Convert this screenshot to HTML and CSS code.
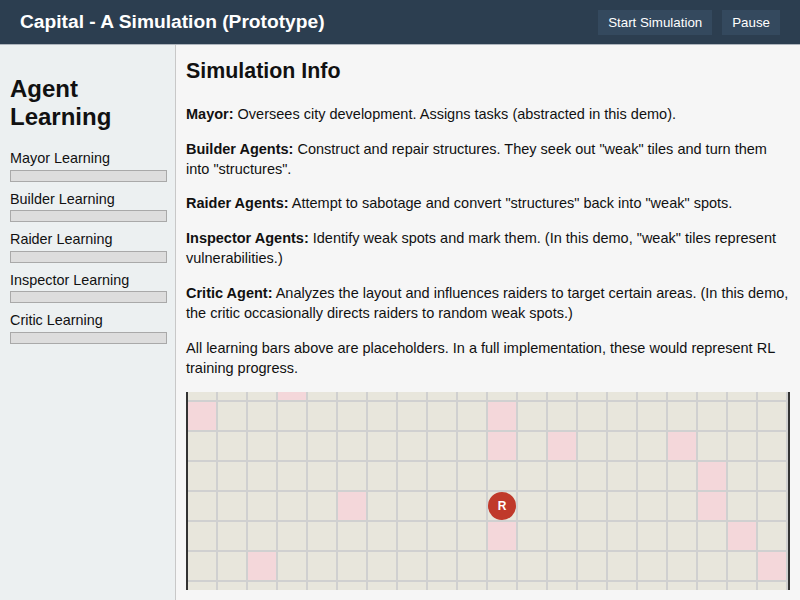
FILE: index.html
```html
<!DOCTYPE html>
<html lang="en">
<head>
<meta charset="utf-8">
<title>Capital - A Simulation (Prototype)</title>
<link rel="stylesheet" href="styles.css">
</head>
<body>
<header class="topbar">
  <h1 class="title">Capital - A Simulation (Prototype)</h1>
  <div class="controls">
    <button class="btn">Start Simulation</button>
    <button class="btn">Pause</button>
  </div>
</header>
<div class="layout">
  <aside class="sidebar">
    <h2 class="side-title">Agent Learning</h2>
    <div class="agent"><div class="agent-label">Mayor Learning</div><div class="bar"></div></div>
    <div class="agent"><div class="agent-label">Builder Learning</div><div class="bar"></div></div>
    <div class="agent"><div class="agent-label">Raider Learning</div><div class="bar"></div></div>
    <div class="agent"><div class="agent-label">Inspector Learning</div><div class="bar"></div></div>
    <div class="agent"><div class="agent-label">Critic Learning</div><div class="bar"></div></div>
  </aside>
  <main class="main">
    <h2 class="main-title">Simulation Info</h2>
    <p class="info"><strong>Mayor:</strong> Oversees city development. Assigns tasks (abstracted in this demo).</p>
    <p class="info"><strong>Builder Agents:</strong> Construct and repair structures. They seek out "weak" tiles and turn them into "structures".</p>
    <p class="info"><strong>Raider Agents:</strong> Attempt to sabotage and convert "structures" back into "weak" spots.</p>
    <p class="info"><strong>Inspector Agents:</strong> Identify weak spots and mark them. (In this demo, "weak" tiles represent vulnerabilities.)</p>
    <p class="info"><strong>Critic Agent:</strong> Analyzes the layout and influences raiders to target certain areas. (In this demo, the critic occasionally directs raiders to random weak spots.)</p>
    <p class="info">All learning bars above are placeholders. In a full implementation, these would represent RL training progress.</p>
    <div class="map">
      <div class="grid">
        <div class="t"></div><div class="t"></div><div class="t"></div><div class="t w"></div><div class="t"></div><div class="t"></div><div class="t"></div><div class="t"></div><div class="t"></div><div class="t"></div><div class="t"></div><div class="t"></div><div class="t"></div><div class="t"></div><div class="t"></div><div class="t"></div><div class="t"></div><div class="t"></div><div class="t"></div><div class="t"></div>
        <div class="t w"></div><div class="t"></div><div class="t"></div><div class="t"></div><div class="t"></div><div class="t"></div><div class="t"></div><div class="t"></div><div class="t"></div><div class="t"></div><div class="t w"></div><div class="t"></div><div class="t"></div><div class="t"></div><div class="t"></div><div class="t"></div><div class="t"></div><div class="t"></div><div class="t"></div><div class="t"></div>
        <div class="t"></div><div class="t"></div><div class="t"></div><div class="t"></div><div class="t"></div><div class="t"></div><div class="t"></div><div class="t"></div><div class="t"></div><div class="t"></div><div class="t w"></div><div class="t"></div><div class="t w"></div><div class="t"></div><div class="t"></div><div class="t"></div><div class="t w"></div><div class="t"></div><div class="t"></div><div class="t"></div>
        <div class="t"></div><div class="t"></div><div class="t"></div><div class="t"></div><div class="t"></div><div class="t"></div><div class="t"></div><div class="t"></div><div class="t"></div><div class="t"></div><div class="t"></div><div class="t"></div><div class="t"></div><div class="t"></div><div class="t"></div><div class="t"></div><div class="t"></div><div class="t w"></div><div class="t"></div><div class="t"></div>
        <div class="t"></div><div class="t"></div><div class="t"></div><div class="t"></div><div class="t"></div><div class="t w"></div><div class="t"></div><div class="t"></div><div class="t"></div><div class="t"></div><div class="t"><span class="raider">R</span></div><div class="t"></div><div class="t"></div><div class="t"></div><div class="t"></div><div class="t"></div><div class="t"></div><div class="t w"></div><div class="t"></div><div class="t"></div>
        <div class="t"></div><div class="t"></div><div class="t"></div><div class="t"></div><div class="t"></div><div class="t"></div><div class="t"></div><div class="t"></div><div class="t"></div><div class="t"></div><div class="t w"></div><div class="t"></div><div class="t"></div><div class="t"></div><div class="t"></div><div class="t"></div><div class="t"></div><div class="t"></div><div class="t w"></div><div class="t"></div>
        <div class="t"></div><div class="t"></div><div class="t w"></div><div class="t"></div><div class="t"></div><div class="t"></div><div class="t"></div><div class="t"></div><div class="t"></div><div class="t"></div><div class="t"></div><div class="t"></div><div class="t"></div><div class="t"></div><div class="t"></div><div class="t"></div><div class="t"></div><div class="t"></div><div class="t"></div><div class="t w"></div>
        <div class="t"></div><div class="t"></div><div class="t"></div><div class="t"></div><div class="t"></div><div class="t"></div><div class="t"></div><div class="t"></div><div class="t"></div><div class="t"></div><div class="t"></div><div class="t"></div><div class="t"></div><div class="t"></div><div class="t"></div><div class="t"></div><div class="t"></div><div class="t"></div><div class="t"></div><div class="t"></div>
      </div>
    </div>
  </main>
</div>
</body>
</html>
```

FILE: styles.css
```css
* { box-sizing: border-box; }
html, body { height: 100%; }
body {
  margin: 0;
  font-family: "Liberation Sans", Arial, Helvetica, sans-serif;
  color: #111;
  display: flex;
  flex-direction: column;
  overflow: hidden;
}
.topbar {
  flex-shrink: 0;
  height: 45px;
  background: #2c3e50;
  border-bottom: 1px solid #aeb5bd;
  display: flex;
  align-items: center;
  justify-content: space-between;
  padding: 0 20px;
}
.title {
  margin: 0;
  color: #fff;
  font-size: 19.2px;
  font-weight: bold;
}
.controls { display: flex; gap: 10px; }
.btn {
  font-family: "Liberation Sans", Arial, sans-serif;
  font-size: 13.333px;
  line-height: 15px;
  padding: 5px 10px;
  border: none;
  background: #34495e;
  color: #fff;
}
.layout {
  flex: 1;
  min-height: 0;
  display: flex;
}
.sidebar {
  width: 176px;
  flex-shrink: 0;
  padding: 10px;
  background: #ecf0f1;
  border-right: 1px solid #c8c8c8;
}
.side-title {
  font-size: 24px;
  margin: 20px 0;
  line-height: 27.6px;
}
.agent { margin-bottom: 9px; }
.agent-label {
  font-size: 14.4px;
  line-height: 16.5px;
  margin-bottom: 3px;
}
.bar {
  box-sizing: content-box;
  width: 100%;
  height: 10px;
  background: #dddddd;
  border: 1px solid #a9a9a9;
}
.main {
  flex: 1;
  min-width: 0;
  padding: 10px;
  background: #f6f6f6;
  display: flex;
  flex-direction: column;
}
.main-title {
  font-size: 21.4px;
  margin: 4px 0 20px;
  line-height: 25px;
}
.info {
  font-size: 14.5px;
  line-height: 20.2px;
  margin: 0 0 14.4px;
}
.map {
  flex: 1;
  min-height: 0;
  overflow: hidden;
  display: flex;
  flex-direction: column;
  justify-content: center;
  border-left: 2px solid #333;
  border-right: 2px solid #333;
}
.grid {
  flex-shrink: 0;
  margin-top: 2px;
  display: grid;
  grid-template-columns: repeat(20, 30px);
  grid-auto-rows: 30px;
}
.t {
  background: #e8e6dc;
  border-right: 2px solid #d0d0d0;
  border-bottom: 2px solid #d0d0d0;
  display: flex;
  align-items: center;
  justify-content: center;
}
.t.w { background: #f4d7da; }
.raider {
  width: 28px;
  height: 28px;
  flex-shrink: 0;
  border-radius: 50%;
  background: #c0392b;
  color: #fff;
  font-size: 12px;
  font-weight: bold;
  display: flex;
  align-items: center;
  justify-content: center;
}
```
